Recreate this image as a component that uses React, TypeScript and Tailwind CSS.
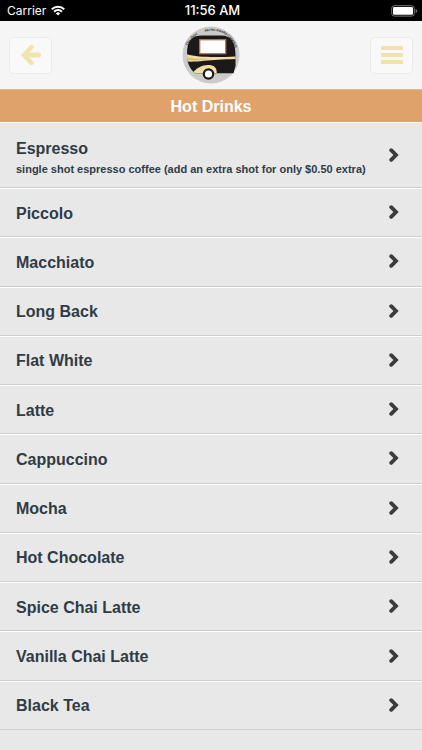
const drinks = [
  'Piccolo',
  'Macchiato',
  'Long Back',
  'Flat White',
  'Latte',
  'Cappuccino',
  'Mocha',
  'Hot Chocolate',
  'Spice Chai Latte',
  'Vanilla Chai Latte',
  'Black Tea',
];

function StatusBar() {
  return (
    <div className="grid h-[21px] grid-cols-3 items-center bg-black pr-1 pl-[7px] font-['Inter','Liberation_Sans',sans-serif] text-xs text-white">
      <div className="flex items-center gap-[5px]">
        <span>Carrier</span>
        <svg viewBox="0 0 14 11" className="h-[11px] w-[14px]" fill="none" stroke="currentColor" strokeWidth="2" aria-hidden="true">
          <path d="M.8 4.200a8.800 8.800 0 0 1 12.400 0" />
          <path d="M3.100 6.700a5.500 5.500 0 0 1 7.800 0" />
          <path d="M4.900 8.400a3 3 0 0 1 4.200 0L7 10.600z" fill="currentColor" stroke="none" />
        </svg>
      </div>
      <span className="text-center text-[13px] font-medium whitespace-nowrap">11:56 AM</span>
      <svg viewBox="0 0 27 12" className="h-3 w-[27px] justify-self-end" aria-hidden="true">
        <rect x="0.7" y="0.7" width="22.6" height="10.4" rx="2.6" fill="none" stroke="#777" strokeWidth="1" />
        <rect x="2" y="2" width="20" height="7.8" rx="1.2" fill="#fff" />
        <path d="M24.6 4v4q1.6-.6 1.6-2t-1.6-2z" fill="#777" />
      </svg>
    </div>
  );
}

function Logo() {
  return (
    <svg viewBox="0 0 58 58" className="size-[58px]" role="img" aria-label="Retro caravan bar">
      <defs>
        <clipPath id="van">
          <path d="M5 28C5 15 9 9.500 20 9.500H39C50 9.500 53.500 17 53.500 30V40L51.500 47.300H13C7 42 5 36 5 28Z" />
        </clipPath>
        <path id="arcLeft" d="M5.600 20A25 25 0 0 1 20 6.200" />
        <path id="arcRight" d="M23 5.800A24 24 0 0 1 54 26" />
      </defs>
      <circle cx="29" cy="29" r="28.500" fill="#cdcbca" />
      <g clipPath="url(#van)">
        <rect width="58" height="58" fill="#1c191a" />
        <path d="M4 28C14 31.500 33 31.500 54 30.500V33C40 33.500 31 33.800 22 34.800C15 35.600 9 36 4 35.500Z" fill="#f0dfa2" />
        <path d="M5 31C12 33 22 33 31 32.600C23 34 14 35 5 34Z" fill="#d5c383" />
        <path d="M11 46.500C14 42.500 20 39 26 39C32 39 34.800 41.500 34.800 47.300H11Z" fill="#f0dfa2" />
      </g>
      <rect x="17.700" y="13.700" width="26" height="14" fill="#fff" stroke="#bd7148" strokeWidth="1.300" />
      <circle cx="26.500" cy="48" r="5.800" fill="#1c191a" />
      <circle cx="26.500" cy="48" r="3.600" fill="#fff" />
      <text className="font-['Liberation_Serif',serif] text-[4px] font-bold italic" fill="#333">
        <textPath href="#arcLeft">The Dept.</textPath>
      </text>
      <text className="font-['Liberation_Sans',sans-serif] text-[3px] font-bold" fill="#222">
        <textPath href="#arcRight">RETRO BOARD CARAVAN</textPath>
      </text>
    </svg>
  );
}

function Chevron() {
  return (
    <svg viewBox="0 0 10 14" className="mb-[3px] h-[14px] w-[10px] shrink-0" fill="none" stroke="#3c3c3c" strokeWidth="3.800" strokeLinejoin="miter" strokeLinecap="round" aria-hidden="true">
      <path d="M2.200 2.200 7 7l-4.800 4.800" />
    </svg>
  );
}

const navButton =
  'flex h-[37px] w-[43px] items-center justify-center rounded-[5px] border border-[#ebebeb] bg-[#f9f9f9] text-[#f1e3ae]';

const row =
  'flex w-full items-center justify-between border-t border-b border-t-white border-b-[#cdcdcd] pt-[2px] pr-[23px] pl-4 text-left';

export default function App() {
  return (
    <div className="flex min-h-screen flex-col bg-[#e8e8e8] font-['Liberation_Sans',Arial,sans-serif] text-[#2f3c45]">
      <StatusBar />
      <header className="flex h-[68px] items-center justify-between bg-[#f5f5f5] px-[9px]">
        <button type="button" aria-label="Back" className={navButton}>
          <svg viewBox="0 0 22 22" className="size-[22px]" fill="none" stroke="currentColor" strokeWidth="5" strokeLinecap="round" aria-hidden="true">
            <path d="M11.500 3 4 11l7.500 8" strokeWidth="4.400" />
            <path d="M5 11h13.500" strokeLinejoin="round" />
          </svg>
        </button>
        <Logo />
        <button type="button" aria-label="Menu" className={navButton}>
          <svg viewBox="0 0 22 18" className="h-[18px] w-[22px]" fill="currentColor" aria-hidden="true">
            <rect y="0" width="22" height="4" rx="0.600" />
            <rect y="7" width="22" height="4" rx="0.600" />
            <rect y="14" width="22" height="4" rx="0.600" />
          </svg>
        </button>
      </header>
      <h1 className="h-[33px] border-t border-[#e6b68c] bg-[#dfa26b] text-center text-base leading-[34px] font-bold text-white">
        Hot Drinks
      </h1>
      <ul className="flex flex-1 flex-col pb-5 text-base leading-5 font-bold">
        <li className="flex h-[66px]">
          <button type="button" className={row}>
            <span className="flex flex-col gap-px pt-1">
              <span>Espresso</span>
              <span className="text-[11px] leading-[18px]">
                single shot espresso coffee (add an extra shot for only $0.50 extra)
              </span>
            </span>
            <Chevron />
          </button>
        </li>
        {drinks.map((name) => (
          <li key={name} className="flex min-h-[49px] flex-1">
            <button type="button" className={row}>
              <span>{name}</span>
              <Chevron />
            </button>
          </li>
        ))}
      </ul>
    </div>
  );
}
